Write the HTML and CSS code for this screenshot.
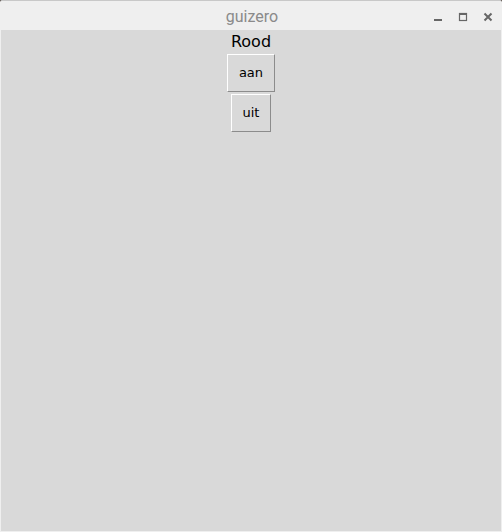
FILE: index.html
```html
<!DOCTYPE html>
<html>
<head>
<meta charset="utf-8">
<link rel="stylesheet" href="styles.css">
</head>
<body>
<div class="window">
  <div class="titlebar">
    <div class="title">guizero</div>
    <div class="controls">
      <svg class="ctl" width="12" height="12" viewBox="0 0 12 12"><rect x="2" y="8" width="8" height="2" fill="#666"/></svg>
      <svg class="ctl" width="12" height="12" viewBox="0 0 12 12"><rect x="2.5" y="2.5" width="7" height="7" fill="none" stroke="#666" stroke-width="1.2"/><rect x="2" y="2" width="8" height="2" fill="#666"/></svg>
      <svg class="ctl" width="12" height="12" viewBox="0 0 12 12"><path d="M2.5 2.5 L9.5 9.5 M9.5 2.5 L2.5 9.5" stroke="#666" stroke-width="2"/></svg>
    </div>
  </div>
  <div class="content">
    <div class="label">Rood</div>
    <button class="btn btn-aan">aan</button>
    <button class="btn btn-uit">uit</button>
  </div>
</div>
</body>
</html>
```
FILE: styles.css
```css
html, body {
  margin: 0;
  padding: 0;
  background: #3a2f28;
}
.window {
  width: 502px;
  height: 532px;
  background: #efefef;
  border-top: 1px solid #c8c8c8;
  box-sizing: border-box;
  display: flex;
  flex-direction: column;
  border-radius: 2px 2px 0 0;
}
.titlebar {
  height: 29px;
  position: relative;
  display: flex;
  align-items: center;
  justify-content: center;
  flex: none;
}
.title {
  font-family: "Roboto", "DejaVu Sans", sans-serif;
  font-size: 16px;
  color: #8a8a8a;
  margin-left: 2px;
  margin-top: 2px;
}
.controls {
  position: absolute;
  right: 8px;
  top: 10px;
  display: flex;
  gap: 13px;
}
.ctl {
  display: block;
}
.content {
  flex: 1;
  margin: 0 1px 1px 1px;
  background: #d9d9d9;
  display: flex;
  flex-direction: column;
  align-items: center;
}
.label {
  font-family: "DejaVu Sans", sans-serif;
  font-size: 16px;
  line-height: 21px;
  padding-top: 1px;
  color: #000;
}
.btn {
  font-family: "DejaVu Sans", sans-serif;
  font-size: 13px;
  color: #000;
  background: #d9d9d9;
  border: 1px solid;
  border-color: #ffffff #8c8c8c #8c8c8c #ffffff;
  height: 38px;
  margin: 2px 0 0 0;
  padding: 0 0 2px 0;
  box-sizing: border-box;
  outline: none;
}
.btn-aan {
  width: 48px;
}
.btn-uit {
  width: 40px;
}
```
